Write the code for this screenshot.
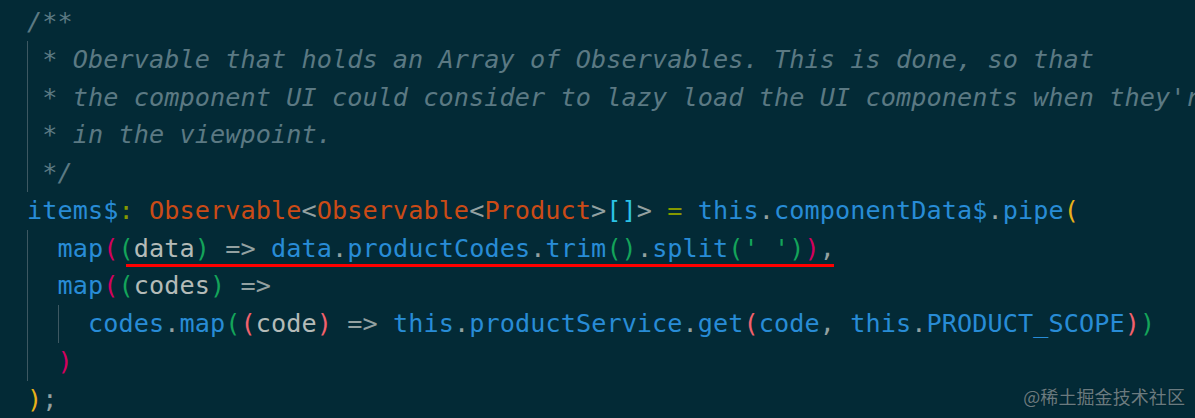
const c = {
  comment: "text-[#5b7983]",
  blue: "text-[#288cd6]",
  orange: "text-[#cb4b16]",
  gray: "text-[#93a1a1]",
  param: "text-[#b4bbb8]",
  olive: "text-[#859900]",
  magenta: "text-[#d3005f]",
  green: "text-[#14a45a]",
  yellow: "text-[#e8b119]",
  cyan: "text-[#2cc3e6]",
  salmon: "text-[#f2616d]"
};

function Guide() {
  return <span className="inline-block h-[37.75px] align-top shadow-[inset_1px_0_0_#3d5862]"> </span>;
}

function Line({ children }) {
  return <div className="h-[37.75px] whitespace-pre leading-[37.75px]">{children}</div>;
}

function T({ k, children }) {
  return <span className={c[k]}>{children}</span>;
}

export default function App() {
  return <div className="relative h-[418px] w-full overflow-hidden bg-[#032a36] font-['DejaVu_Sans_Mono',monospace] text-[25.2px] tracking-[0.08px]">
      <div className="pt-[3px] pl-[27px]">
        <div className={`italic ${c.comment}`}>
          <Line>/**</Line>
          <Line><Guide />* Obervable that holds an Array of Observables. This is done, so that</Line>
          <Line><Guide />* the component UI could consider to lazy load the UI components when they're</Line>
          <Line><Guide />* in the viewpoint.</Line>
          <Line><Guide />*/</Line>
        </div>
        <Line>
          <T k="blue">items$</T><T k="olive">:</T> <T k="orange">Observable</T><T k="gray">&lt;</T><T k="orange">Observable</T><T k="gray">&lt;</T><T k="orange">Product</T><T k="gray">&gt;</T><T k="cyan">[]</T><T k="gray">&gt;</T> <T k="olive">=</T> <T k="blue">this</T><T k="gray">.</T><T k="blue">componentData$</T><T k="gray">.</T><T k="blue">pipe</T><T k="yellow">(</T>
        </Line>
        <Line>
          <Guide /> <T k="blue">map</T><T k="magenta">(</T><T k="green">(</T><T k="param">data</T><T k="green">)</T> <T k="gray">=&gt;</T> <T k="blue">data</T><T k="gray">.</T><T k="blue">productCodes</T><T k="gray">.</T><T k="blue">trim</T><T k="green">()</T><T k="gray">.</T><T k="blue">split</T><T k="green">(' ')</T><T k="magenta">)</T><T k="gray">,</T>
        </Line>
        <Line>
          <Guide /> <T k="blue">map</T><T k="magenta">(</T><T k="green">(</T><T k="param">codes</T><T k="green">)</T> <T k="gray">=&gt;</T>
        </Line>
        <Line>
          <Guide /> <Guide /> <T k="blue">codes</T><T k="gray">.</T><T k="blue">map</T><T k="green">(</T><T k="salmon">(</T><T k="param">code</T><T k="salmon">)</T> <T k="gray">=&gt;</T> <T k="blue">this</T><T k="gray">.</T><T k="blue">productService</T><T k="gray">.</T><T k="blue">get</T><T k="salmon">(</T><T k="blue">code</T><T k="gray">,</T> <T k="blue">this</T><T k="gray">.</T><T k="blue">PRODUCT_SCOPE</T><T k="salmon">)</T><T k="green">)</T>
        </Line>
        <Line>
          <Guide /> <T k="magenta">)</T>
        </Line>
        <Line>
          <T k="yellow">)</T><T k="gray">;</T>
        </Line>
      </div>

      <div className="absolute left-[126px] top-[264px] h-[3px] w-[708px] bg-[#ff0000]" />

      <div className="absolute right-[10px] top-[384px] font-['Noto_Sans_CJK_SC',sans-serif] text-[18px] leading-[24px] text-[#6a7b80] [text-shadow:0_0_1px_#0a1c22]">
        @稀土掘金技术社区
      </div>
    </div>;
}
